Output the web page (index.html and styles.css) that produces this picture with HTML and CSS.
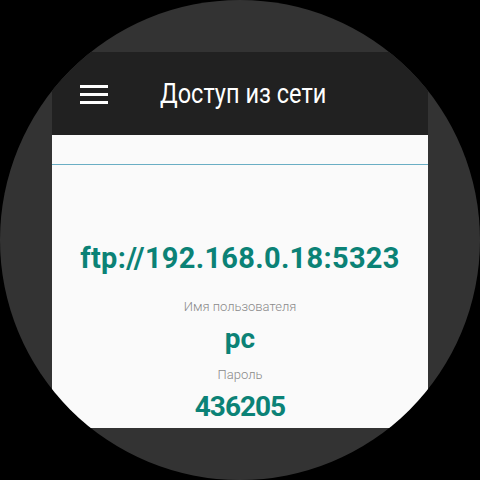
FILE: index.html
```html
<!DOCTYPE html>
<html>
<head>
<meta charset="utf-8">
<link rel="stylesheet" href="styles.css">
</head>
<body>
<div class="watch">
  <div class="screen">
    <header class="bar">
      <div class="menu">
        <span></span><span></span><span></span>
      </div>
      <h1 class="title">Доступ из сети</h1>
    </header>
    <main class="content">
      <div class="divider"></div>
      <div class="url">ftp://192.168.0.18:5323</div>
      <div class="label label-user">Имя пользователя</div>
      <div class="value value-user">pc</div>
      <div class="label label-pass">Пароль</div>
      <div class="value value-pass">436205</div>
    </main>
  </div>
</div>
</body>
</html>
```
FILE: styles.css
```css
html, body {
  margin: 0;
  padding: 0;
  background: #000;
  width: 480px;
  height: 480px;
  overflow: hidden;
  font-family: Roboto, "Noto Sans", sans-serif;
}
.watch {
  width: 480px;
  height: 480px;
  border-radius: 50%;
  background: #333333;
  overflow: hidden;
  display: flex;
  align-items: center;
  justify-content: center;
}
.screen {
  width: 376px;
  height: 376px;
  display: flex;
  flex-direction: column;
}
.bar {
  height: 83px;
  flex: none;
  background: #212121;
  display: flex;
  align-items: center;
  padding-left: 28px;
}
.menu {
  display: flex;
  flex-direction: column;
  gap: 5px;
  width: 28px;
  margin-top: 1px;
}
.menu span {
  display: block;
  height: 3px;
  background: #fff;
}
.title {
  margin: 0 0 0 52px;
  color: #fff;
  font-size: 28px;
  font-weight: 400;
  line-height: 32px;
  white-space: nowrap;
  transform: scaleX(0.84);
  transform-origin: left center;
}
.content {
  flex: 1;
  background: #fafafa;
  display: flex;
  flex-direction: column;
  align-items: center;
  overflow: hidden;
}
.divider {
  align-self: stretch;
  height: 1px;
  background: #6aaec4;
  margin-top: 29px;
  flex: none;
}
.url {
  margin-top: 77px;
  color: #0b8276;
  font-size: 29px;
  font-weight: 700;
  line-height: 32px;
  letter-spacing: 0.3px;
  white-space: nowrap;
}
.label {
  color: #8a8a8a;
  font-size: 13px;
  font-weight: 300;
  line-height: 16px;
}
.label-user { margin-top: 25px; }
.label-pass { margin-top: 12px; }
.value {
  color: #0b8276;
  font-size: 28px;
  font-weight: 700;
  line-height: 32px;
}
.value-user { margin-top: 8px; }
.value-pass { margin-top: 8px; letter-spacing: -1px; }
```
